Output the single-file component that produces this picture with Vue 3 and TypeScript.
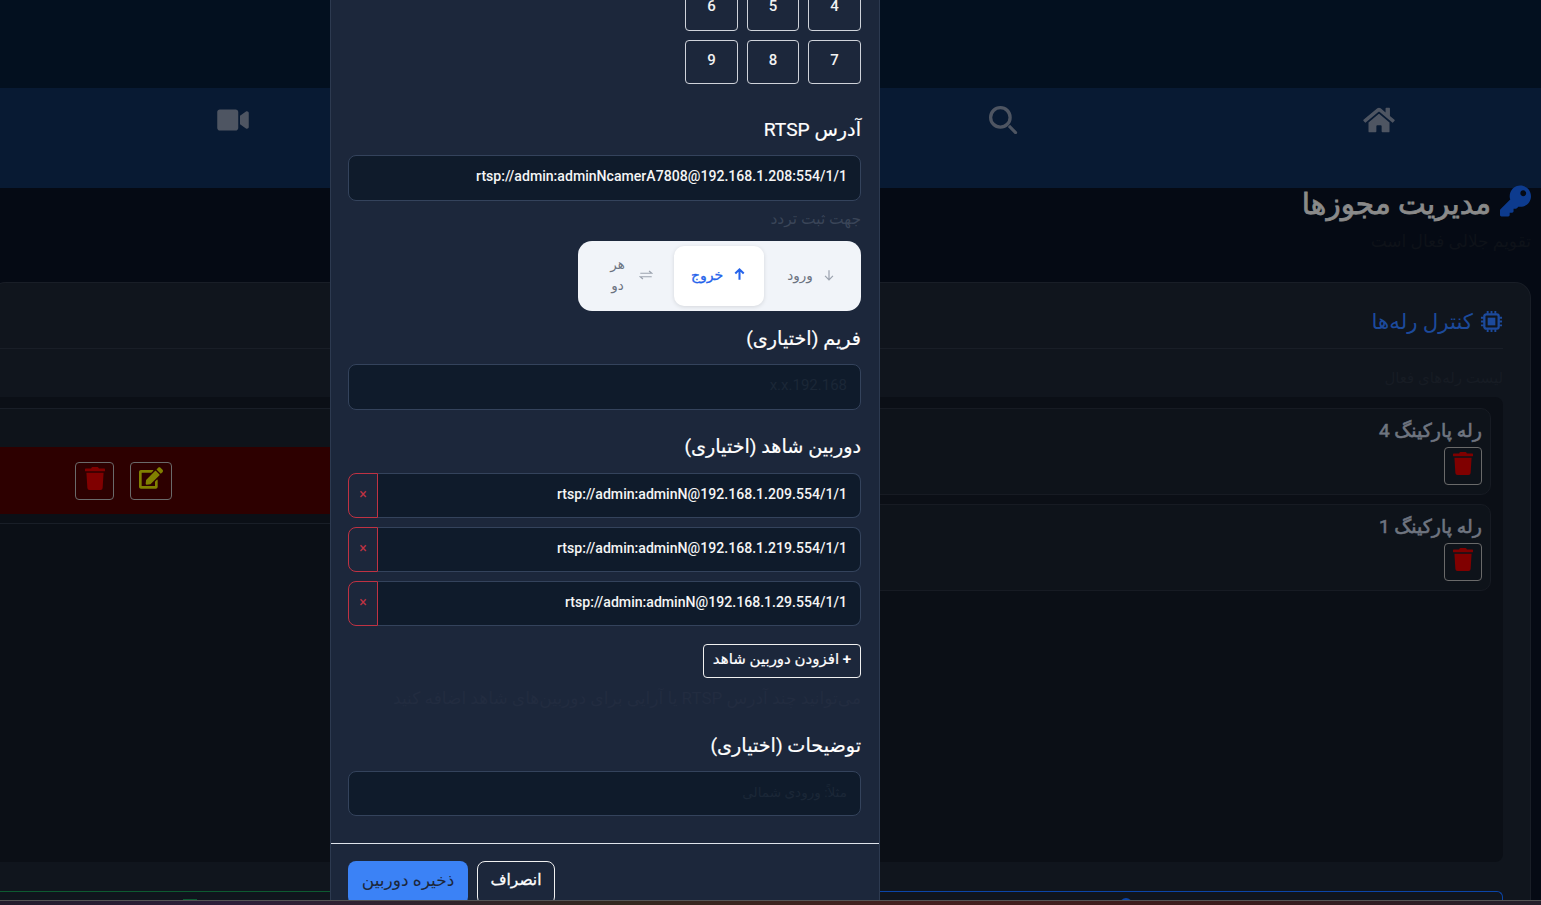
<script setup lang="ts">
const icons = {
  home: { vb: '0 0 576 512', d: 'M280.37 148.26L96 300.11V464a16 16 0 0 0 16 16l112.06-.29a16 16 0 0 0 15.92-16V368a16 16 0 0 1 16-16h64a16 16 0 0 1 16 16v95.64a16 16 0 0 0 16 16.05L464 480a16 16 0 0 0 16-16V300L295.67 148.26a12.19 12.19 0 0 0-15.3 0zM571.6 251.47L488 182.56V44.05a12 12 0 0 0-12-12h-56a12 12 0 0 0-12 12v72.61L318.47 43a48 48 0 0 0-61 0L4.34 251.47a12 12 0 0 0-1.6 16.9l25.5 31A12 12 0 0 0 45.15 301l235.22-193.74a12.19 12.19 0 0 1 15.3 0L530.9 301a12 12 0 0 0 16.9-1.6l25.5-31a12 12 0 0 0-1.7-16.93z' },
  search: { vb: '0 0 512 512', d: 'M208 0a208 208 0 1 0 0 416a208 208 0 1 0 0-416zm0 60a148 148 0 1 1 0 296a148 148 0 1 1 0-296zM345 385l40-40L506 466a28 28 0 0 1-40 40z' },
  video: { vb: '0 0 576 512', d: 'M336.2 64H47.8C21.4 64 0 85.4 0 111.8v288.4C0 426.6 21.4 448 47.8 448h288.4c26.4 0 47.8-21.4 47.8-47.8V111.8c0-26.4-21.4-47.8-47.8-47.8zm189.4 37.7L416 177.3v157.4l109.6 75.5c21.2 14.6 50.4-.3 50.4-25.8V127.5c0-25.4-29.1-40.4-50.4-25.8z' }
}
const navItems = [icons.home, icons.search, null, icons.video]
const trash = 'M432 32H312l-9.4-18.7A24 24 0 0 0 281.1 0H166.8a23.72 23.72 0 0 0-21.4 13.3L136 32H16A16 16 0 0 0 0 48v32a16 16 0 0 0 16 16h416a16 16 0 0 0 16-16V48a16 16 0 0 0-16-16zM53.2 467a48 48 0 0 0 47.9 45h245.8a48 48 0 0 0 47.9-45L416 128H32z'
const edit = 'M402.6 83.2l90.2 90.2c3.8 3.8 3.8 10 0 13.8L274.4 405.6l-92.8 10.3c-12.4 1.4-22.9-9.1-21.5-21.5l10.3-92.8L388.8 83.2c3.8-3.8 10-3.8 13.8 0zm162-22.9l-48.8-48.8c-15.2-15.2-39.9-15.2-55.2 0l-35.4 35.4c-3.8 3.8-3.8 10 0 13.8l90.2 90.2c3.8 3.8 10 3.8 13.8 0l35.4-35.4c15.2-15.3 15.2-40 0-55.2zM384 346.2V448H64V128h229.8c3.2 0 6.2-1.3 8.5-3.5l40-40c7.6-7.6 2.2-20.5-8.5-20.5H48C21.5 64 0 85.5 0 112v352c0 26.5 21.5 48 48 48h352c26.5 0 48-21.5 48-48V306.2c0-10.7-12.9-16-20.5-8.5l-40 40c-2.2 2.3-3.5 5.3-3.5 8.5z'
const key = 'M512 176.001C512 273.203 433.202 352 336 352c-11.22 0-22.19-1.062-32.827-3.069l-24.012 27.014A23.999 23.999 0 0 1 261.223 384H224v40c0 13.255-10.745 24-24 24h-40v40c0 13.255-10.745 24-24 24H24c-13.255 0-24-10.745-24-24v-78.059c0-6.365 2.529-12.47 7.029-16.971l161.802-161.802C163.108 213.814 160 195.271 160 176 160 78.798 238.797.001 335.999 0 433.488-.001 512 78.511 512 176.001zM336 128c0 26.51 21.49 48 48 48s48-21.49 48-48-21.49-48-48-48-48 21.49-48 48z'
const relays = ['رله پارکینگ 4', 'رله پارکینگ 1']
const keys = ['4', '5', '6', '7', '8', '9']
const witnesses = [
  'rtsp://admin:adminN@192.168.1.209.554/1/1',
  'rtsp://admin:adminN@192.168.1.219.554/1/1',
  'rtsp://admin:adminN@192.168.1.29.554/1/1'
]
</script>

<template>
  <div class="page">
    <header class="topbar"></header>
    <nav class="nav">
      <div v-for="(item, i) in navItems" :key="i" class="nav-item">
        <svg v-if="item" :viewBox="item.vb" class="nav-icon"><path :d="item.d" /></svg>
      </div>
    </nav>
    <main class="main">
      <div class="head">
        <h1 class="title">
          <svg viewBox="0 0 512 512" class="key-icon"><path :d="key" /></svg>
          <span>مدیریت مجوزها</span>
        </h1>
        <p class="subtitle">تقویم جلالی فعال است</p>
      </div>
      <section class="card">
        <h2 class="card-title">
          <svg viewBox="0 0 24 24" class="chip-icon">
            <rect x="4.5" y="4.5" width="15" height="15" rx="2" fill="none" stroke="currentColor" stroke-width="2.4" />
            <rect x="8" y="8" width="8" height="8" fill="currentColor" />
            <path d="M8 1v3M12 1v3M16 1v3M8 20v3M12 20v3M16 20v3M1 8h3M1 12h3M1 16h3M20 8h3M20 12h3M20 16h3" stroke="currentColor" stroke-width="2" />
          </svg>
          <span>کنترل رله‌ها</span>
        </h2>
        <p class="list-label">لیست رله‌های فعال</p>
        <div class="panel">
          <div class="relays">
            <div v-for="r in relays" :key="r" class="relay">
              <div class="relay-name">{{ r }}</div>
              <button class="icon-btn relay-btn">
                <svg viewBox="0 0 448 512" class="trash"><path :d="trash" /></svg>
              </button>
            </div>
          </div>
          <div class="table">
            <div class="table-head"></div>
            <div class="table-row">
              <button class="icon-btn action-edit">
                <svg viewBox="0 0 576 512" class="edit"><path :d="edit" /></svg>
              </button>
              <button class="icon-btn action-trash">
                <svg viewBox="0 0 448 512" class="trash"><path :d="trash" /></svg>
              </button>
            </div>
            <div class="table-line"></div>
          </div>
        </div>
        <div class="lower">
          <div class="box box-blue"><span class="mark-blue"></span></div>
          <div class="box box-green"><span class="mark-green"></span></div>
        </div>
      </section>
    </main>

    <div class="modal">
      <div class="modal-body">
        <div class="keypad">
          <button v-for="k in keys" :key="k" class="key">{{ k }}</button>
        </div>

        <label class="label label-rtsp">آدرس RTSP</label>
        <div class="input">rtsp://admin:adminNcamerA7808@192.168.1.208:554/1/1</div>
        <p class="hint">جهت ثبت تردد</p>

        <div class="segment">
          <div class="seg seg-in">
            <svg viewBox="0 0 16 16" class="seg-icon"><path d="M8 2.5v11M3.5 9 8 13.5 12.5 9" /></svg>
            <span>ورود</span>
          </div>
          <div class="seg seg-active">
            <svg viewBox="0 0 16 16" class="seg-icon"><path d="M8 13.5v-11M3.5 7 8 2.5 12.5 7" /></svg>
            <span>خروج</span>
          </div>
          <div class="seg seg-both">
            <svg viewBox="0 0 16 16" class="seg-icon"><path d="M1.5 6h13l-3-2.5M14.5 10h-13l3 2.5" /></svg>
            <span class="seg-text">هر دو</span>
          </div>
        </div>

        <label class="label label-frame">فریم (اختیاری)</label>
        <div class="input placeholder">x.x.192.168</div>

        <label class="label label-witness">دوربین شاهد (اختیاری)</label>
        <div class="witnesses">
          <div v-for="w in witnesses" :key="w" class="witness">
            <div class="witness-input">{{ w }}</div>
            <button class="remove">×</button>
          </div>
        </div>
        <button class="add">+ افزودن دوربین شاهد</button>
        <p class="faint">می‌توانید چند آدرس RTSP یا آرایی برای دوربین‌های شاهد اضافه کنید</p>

        <label class="label label-desc">توضیحات (اختیاری)</label>
        <div class="input placeholder placeholder-fa">مثلاً: ورودی شمالی</div>
      </div>
      <div class="modal-footer">
        <button class="cancel">انصراف</button>
        <button class="save">ذخیره دوربین</button>
      </div>
    </div>

    <div class="strip"></div>
  </div>
</template>

<style>
html, body { margin: 0; background: #040a14; overflow: hidden; }
</style>

<style scoped>
.page {
  position: relative;
  width: 1541px;
  height: 905px;
  overflow: hidden;
  direction: rtl;
  background: #050a14;
  font-family: Roboto, "Noto Sans", "DejaVu Sans", sans-serif;
}
button { font-family: inherit; background: none; padding: 0; }
.topbar { height: 88px; background: #03101f; }
.nav {
  height: 100px;
  box-sizing: border-box;
  background: #081a33;
  display: flex;
  padding: 18px 144px 0 0;
}
.nav-item { width: 36px; height: 28px; margin-left: 349px; }
.nav-item:first-child { margin-left: 340px; }
.nav-item:last-child { margin-left: 0; }
.nav-icon { width: 36px; height: 28px; fill: #4e5562; display: block; }
.main { padding: 0 10px 0 0; }
.head { height: 94px; }
.title {
  margin: 0;
  display: flex;
  align-items: center;
  gap: 9px;
  height: 32px;
  font-size: 29.5px;
  font-weight: 400;
  -webkit-text-stroke: 0.8px #8a8a8a;
  color: #8a8a8a;
}
.key-icon { width: 31px; height: 32px; fill: #0d3b8e; transform: translateY(-3px); }
.subtitle { margin: 12px 0 0; font-size: 17px; line-height: 18px; color: #0e1219; }
.card {
  margin-left: -10px;
  height: 700px;
  box-sizing: border-box;
  padding: 18px 27px 0 0;
  background: #10151d;
  border: 1px solid #191e27;
  border-left: 0;
  border-radius: 16px;
}
.card-title {
  margin: 0;
  height: 48px;
  box-sizing: border-box;
  border-bottom: 1px solid #191e27;
  display: flex;
  align-items: flex-start;
  padding-top: 6px;
  gap: 7px;
  font-size: 21.3px;
  line-height: 30px;
  font-weight: 400;
  color: #1c4a9c;
}
.chip-icon { width: 23px; height: 23px; margin-top: 3px; flex: none; }
.list-label { margin: 19px 0 0; height: 29px; font-size: 15px; line-height: 20px; color: #171c24; }
.panel {
  height: 465px;
  background: #0b0f16;
  border-radius: 8px;
  display: flex;
  gap: 20px;
  padding: 11px 12px 0 0;
  box-sizing: border-box;
}
.relays { width: 760px; display: flex; flex-direction: column; gap: 9px; }
.relay {
  height: 87px;
  box-sizing: border-box;
  background: #0e131a;
  border: 1px solid #171b23;
  border-radius: 10px;
  padding: 8px 8px 0;
}
.relay-name { font-size: 19px; line-height: 28px; font-weight: 400; -webkit-text-stroke: 0.6px #6f7580; color: #6f7580; }
.icon-btn {
  width: 38px;
  height: 38px;
  border: 1px solid #6a6a6a;
  border-radius: 4px;
  display: flex;
  align-items: center;
  justify-content: center;
  box-sizing: border-box;
}
.relay-btn { margin-top: 2px; }
.trash { width: 20px; height: 23px; fill: #800000; margin-bottom: 5px; }
.edit { width: 24px; height: 22px; fill: #808000; margin-bottom: 5px; }
.table { flex: 1; }
.table-head { height: 38px; border-top: 1px solid #191e27; background: #0e131a; }
.table-row {
  height: 67px;
  background: #2d0000;
  display: flex;
  align-items: center;
  gap: 16px;
  padding-left: 85px;
  justify-content: flex-end;
  box-sizing: border-box;
}
.action-edit { width: 42px; }
.action-trash { width: 39px; }
.table-line { margin-top: 9px; height: 1px; background: #191e27; }
.lower { margin-top: 29px; display: flex; gap: 24px; }
.box { height: 40px; border-radius: 6px 6px 0 0; display: flex; box-sizing: border-box; }
.box-blue {
  width: 754px;
  flex: none;
  border-top: 1px solid #0b45a8;
  border-right: 1px solid #0b45a8;
  justify-content: center;
  padding-top: 6px;
}
.mark-blue { width: 12px; height: 12px; border-radius: 50%; background: #0b45a8; }
.box-green { flex: 1; border-top: 1px solid #0d5a31; justify-content: flex-end; padding-top: 7px; }
.mark-green { width: 14px; height: 3px; margin-left: 193px; background: #0d5a31; }

.modal {
  position: absolute;
  left: 330px;
  top: 0;
  width: 550px;
  height: 905px;
  box-sizing: border-box;
  background: #1c273b;
  border: 1px solid #2d3a50;
  border-width: 0 1px;
  color: #fff;
  display: flex;
  flex-direction: column;
}
.modal-body { height: 843px; padding: 0 18px 0 17px; box-sizing: border-box; overflow: hidden; }
.keypad {
  margin-top: -13px;
  display: grid;
  grid-template-columns: 53px 52px 53px;
  grid-auto-rows: 44px;
  gap: 9px;
  justify-content: start;
}
.key {
  border: 1px solid #cfd3da;
  border-radius: 4px;
  color: #f2f2f2;
  font-size: 15px;
  font-weight: 500;
  padding-bottom: 6px;
}
.keypad .key:nth-child(n + 4) { padding-bottom: 4px; }
.label {
  display: block;
  font-size: 19.2px;
  line-height: 26px;
  font-weight: 400;
  color: #fff;
  -webkit-text-stroke: 0.2px #fff;
}
.label-rtsp { margin-top: 33px; margin-bottom: 12px; }
.label-frame { margin-top: 15px; margin-bottom: 12px; }
.label-witness { margin-top: 24px; margin-bottom: 13px; }
.label-desc { margin-top: 26px; margin-bottom: 12px; }
.input {
  height: 46px;
  box-sizing: border-box;
  background: #0f1b2b;
  border: 1px solid #34435c;
  border-radius: 8px;
  padding: 0 13px;
  line-height: 41px;
  font-size: 14.1px;
  font-weight: 500;
  direction: ltr;
  text-align: right;
  color: #f5f5f5;
}
.placeholder { color: #1b2737; font-size: 15px; font-weight: 400; }
.placeholder-fa { direction: rtl; font-size: 13.6px; height: 45px; }
.hint { margin: 9px 0 13px; font-size: 15.5px; line-height: 18px; color: #3a4558; }
.segment {
  width: 283px;
  height: 70px;
  box-sizing: border-box;
  background: #f1f4f9;
  border-radius: 14px;
  padding: 5px;
  display: flex;
}
.seg {
  width: 92px;
  flex: none;
  border-radius: 10px;
  display: flex;
  align-items: center;
  justify-content: center;
  gap: 9px;
  padding-bottom: 3px;
  box-sizing: border-box;
  font-size: 13.5px;
  color: #6b7280;
}
.seg-in { padding-left: 3px; }
.seg-icon { width: 14px; height: 14px; flex: none; fill: none; stroke: #9ca3af; stroke-width: 1.4; }
.seg-active {
  width: 90px;
  background: #fff;
  color: #2563eb;
  font-size: 14px;
  font-weight: 500;
  -webkit-text-stroke: 0.3px #2563eb;
  box-shadow: 0 1px 4px rgba(0, 0, 0, 0.12);
}
.seg-active .seg-icon { width: 15px; height: 15px; stroke: #2563eb; stroke-width: 2.2; -webkit-text-stroke: 0; }
.seg-both { width: 91px; gap: 12px; padding-left: 4px; }
.seg-text { width: 18px; line-height: 21px; text-align: center; }
.witnesses { display: flex; flex-direction: column; gap: 9px; }
.witness { display: flex; height: 45px; }
.witness-input {
  flex: 1;
  box-sizing: border-box;
  background: #0f1b2b;
  border: 1px solid #34435c;
  border-left: 0;
  border-radius: 0 8px 8px 0;
  padding: 0 13px;
  direction: ltr;
  text-align: right;
  line-height: 41px;
  font-size: 14.1px;
  font-weight: 500;
  color: #f5f5f5;
}
.remove {
  width: 30px;
  box-sizing: border-box;
  border: 1px solid #dc3545;
  border-radius: 8px 0 0 8px;
  background: #1c273b;
  color: #dc3545;
  font-size: 14px;
  padding-bottom: 4px;
  opacity: 0.85;
}
.add {
  display: block;
  margin-top: 18px;
  width: 158px;
  height: 34px;
  border: 1px solid #f0f0f0;
  border-radius: 4px;
  color: #fff;
  font-size: 15px;
  font-weight: 500;
  -webkit-text-stroke: 0.2px #fff;
  padding-bottom: 4px;
  white-space: nowrap;
}
.faint { margin: 11px 0 0; font-size: 17px; line-height: 18px; color: #222c40; white-space: nowrap; }
.modal-footer {
  flex: 1;
  border-top: 1px solid #dfe4ec;
  padding: 17px 18px 0 17px;
  display: flex;
  justify-content: flex-end;
  gap: 9px;
}
.cancel, .save { height: 44px; border-radius: 8px; padding-bottom: 7px; }
.cancel { width: 78px; border: 1px solid #f0f0f0; color: #fff; font-size: 15.5px; -webkit-text-stroke: 0.3px #fff; }
.save { width: 120px; border: 0; background: #3b82f6; color: #1c273b; font-size: 17px; }
.strip {
  position: absolute;
  left: 0;
  right: 0;
  bottom: 0;
  height: 5px;
  box-sizing: border-box;
  border-top: 1px solid #555;
  background: linear-gradient(90deg, #231c2c 0%, #2e1f3a 15%, #33281f 40%, #45201f 60%, #3b1c1c 80%, #241f2b 100%);
}
</style>
